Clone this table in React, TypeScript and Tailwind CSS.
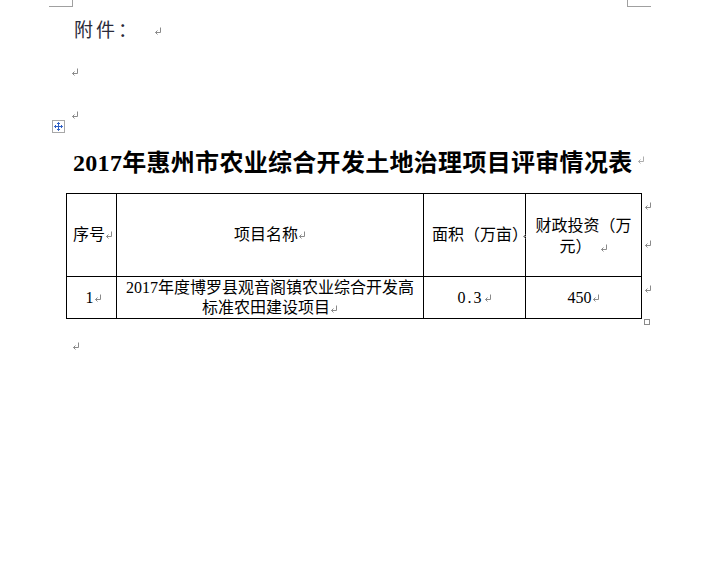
import React from "react";

// paragraph mark (the little ↵ Word draws)
function Ret({ className = "" }: { className?: string }) {
  return (
    <svg width="8" height="8" viewBox="0 0 8 8" className={"inline-block shrink-0 align-middle " + className}>
      <path d="M6.5 0.5 V5.5 H1.5" fill="none" stroke="#8a8a8a" strokeWidth="1" />
      <path d="M3.5 3.5 L1.5 5.5 L3.5 7.5" fill="none" stroke="#8a8a8a" strokeWidth="1" />
    </svg>
  );
}

// table move handle
function Handle() {
  return (
    <svg width="13" height="13" viewBox="0 0 13 13">
      <rect x="0.5" y="0.5" width="12" height="12" fill="#fff" stroke="#a8a8a8" />
      <path d="M6.5 2.5 V10.5 M2.5 6.5 H10.5" stroke="#2f5fc4" strokeWidth="1" />
      <path d="M5 4 L6.5 2.5 L8 4 M5 9 L6.5 10.5 L8 9 M4 5 L2.5 6.5 L4 8 M9 5 L10.5 6.5 L9 8" fill="none" stroke="#2f5fc4" strokeWidth="1" />
    </svg>
  );
}

const body = { fontFamily: '"Liberation Serif", "Noto Sans CJK SC", serif' };

export default function App() {
  return (
    <div className="w-[719px] h-[576px] bg-white overflow-hidden text-black" style={body}>
      {/* PAGE CORNER MARKS */}
      <div className="flex h-[7px]">
        <div className="ml-[49px] w-[24px] h-[7px] border-r border-b border-[#a0a0a0]" />
        <div className="ml-[554px] w-[24px] h-[7px] border-l border-b border-[#a0a0a0]" />
      </div>

      {/* 附件 */}
      <div className="ml-[74px] mt-[12px] h-[20px] flex items-center">
        <span
          className="text-[19px] leading-[20px] tracking-[3px] text-[#2a2a3a]"
          style={{ fontFamily: '"Noto Sans CJK SC", sans-serif' }}
        >
          附件：
        </span>
        <Ret className="ml-[14px] mt-[4px]" />
      </div>

      <div className="ml-[71px] mt-[27px] h-[12px] flex items-center">
        <Ret />
      </div>
      <div className="ml-[71px] mt-[31px] h-[11px] flex items-center">
        <Ret />
      </div>

      {/* TABLE HANDLE */}
      <div className="ml-[52px] h-[13px]">
        <Handle />
      </div>

      {/* TITLE */}
      <div className="ml-[73px] mt-[15px] h-[30px] flex items-center">
        <span className="text-[24px] leading-[30px] font-bold tracking-[0.3px]">
          2017年惠州市农业综合开发土地治理项目评审情况表
        </span>
        <Ret className="ml-[4px] -mt-[6px] opacity-70" />
      </div>

      {/* TABLE */}
      <div className="ml-[66px] mt-[15px] flex items-start">
        <div className="grid grid-cols-[49px_306px_101px_115px] grid-rows-[82px_41px] gap-px p-px bg-black text-[16px] leading-[20px]">
          <div className="bg-white flex items-center pl-[6px] whitespace-nowrap">
            序号
            <Ret />
          </div>
          <div className="bg-white flex items-center justify-center">
            项目名称
            <Ret />
          </div>
          <div className="bg-white flex items-center pl-[8px] whitespace-nowrap">
            面积（万亩）
            <Ret className="-ml-[6px]" />
          </div>
          <div className="bg-white flex flex-col items-center justify-center leading-[21px] pt-[2px]">
            <span>财政投资（万</span>
            <span className="whitespace-nowrap">
              元）
              <Ret className="ml-[8px]" />
            </span>
          </div>

          <div className="bg-white flex items-center justify-center pl-[4px]">
            1
            <Ret />
          </div>
          <div className="bg-white flex flex-col items-center justify-center">
            <span>2017年度博罗县观音阁镇农业综合开发高</span>
            <span>
              标准农田建设项目
              <Ret />
            </span>
          </div>
          <div className="bg-white flex items-center justify-center">
            <span className="tracking-[2px]">0.3</span>
            <Ret />
          </div>
          <div className="bg-white flex items-center justify-center">
            450
            <Ret />
          </div>
        </div>

        {/* ROW END MARKS */}
        <div className="flex flex-col ml-[2px] w-[10px]">
          <Ret className="mt-[9px]" />
          <Ret className="mt-[30px]" />
          <Ret className="mt-[37px]" />
          <div className="mt-[26px] w-[6px] h-[6px] border border-[#8a8a8a]" />
        </div>
      </div>

      <div className="ml-[72px] mt-[15px] h-[12px] flex items-center">
        <Ret />
      </div>
    </div>
  );
}
